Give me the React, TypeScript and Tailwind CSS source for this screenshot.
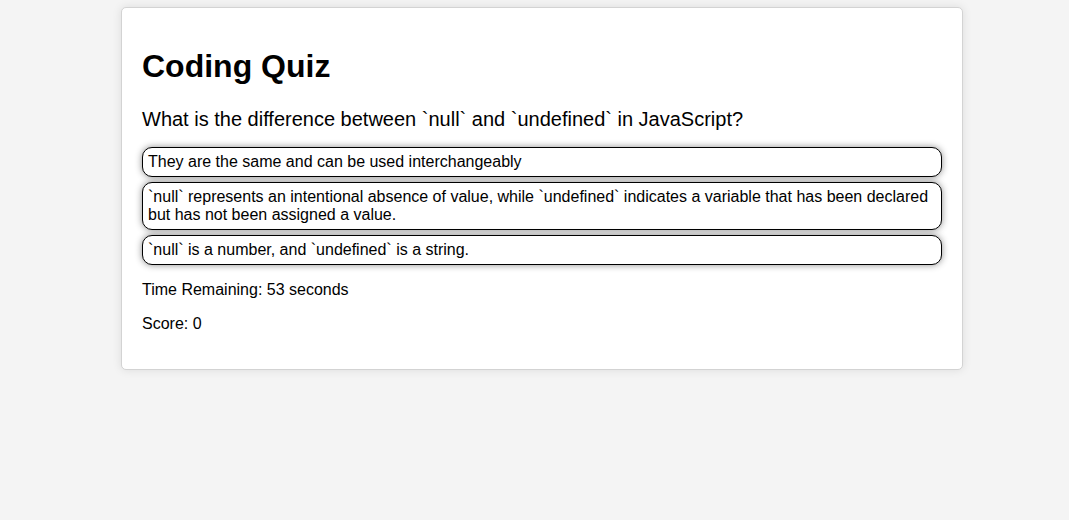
import React from "react";

const options = [
  "They are the same and can be used interchangeably",
  "`null` represents an intentional absence of value, while `undefined` indicates a variable that has been declared but has not been assigned a value.",
  "`null` is a number, and `undefined` is a string.",
];

export default function App() {
  return (
    <div
      className="min-h-screen w-full bg-[#f4f4f4] pt-[7px] text-black"
      style={{ fontFamily: '"Liberation Sans", Arial, sans-serif' }}
    >
      <div className="ml-[121px] w-[842px] rounded-[5px] border border-[#d3d3d3] bg-white p-[20px] shadow-[0_0_10px_rgba(0,0,0,0.1)]">
        <h1 className="mt-[20px] text-[32px] font-bold leading-[37px]">Coding Quiz</h1>
        <p className="mt-[23px] text-[20px] leading-[23px]">
          What is the difference between `null` and `undefined` in JavaScript?
        </p>
        <div className="mt-[16px] flex flex-col gap-[5px]">
          {options.map((o) => (
            <button
              key={o}
              className="w-full rounded-[10px] border border-black bg-white px-[5px] py-[5px] text-left text-[16px] leading-[18px] text-black shadow-[0_0_7px_rgba(0,0,0,0.45)]"
            >
              {o}
            </button>
          ))}
        </div>
        <p className="mt-[16px] text-[16px] leading-[18px]">Time Remaining: 53 seconds</p>
        <p className="mt-[16px] mb-[16px] text-[16px] leading-[18px]">Score: 0</p>
      </div>
    </div>
  );
}
